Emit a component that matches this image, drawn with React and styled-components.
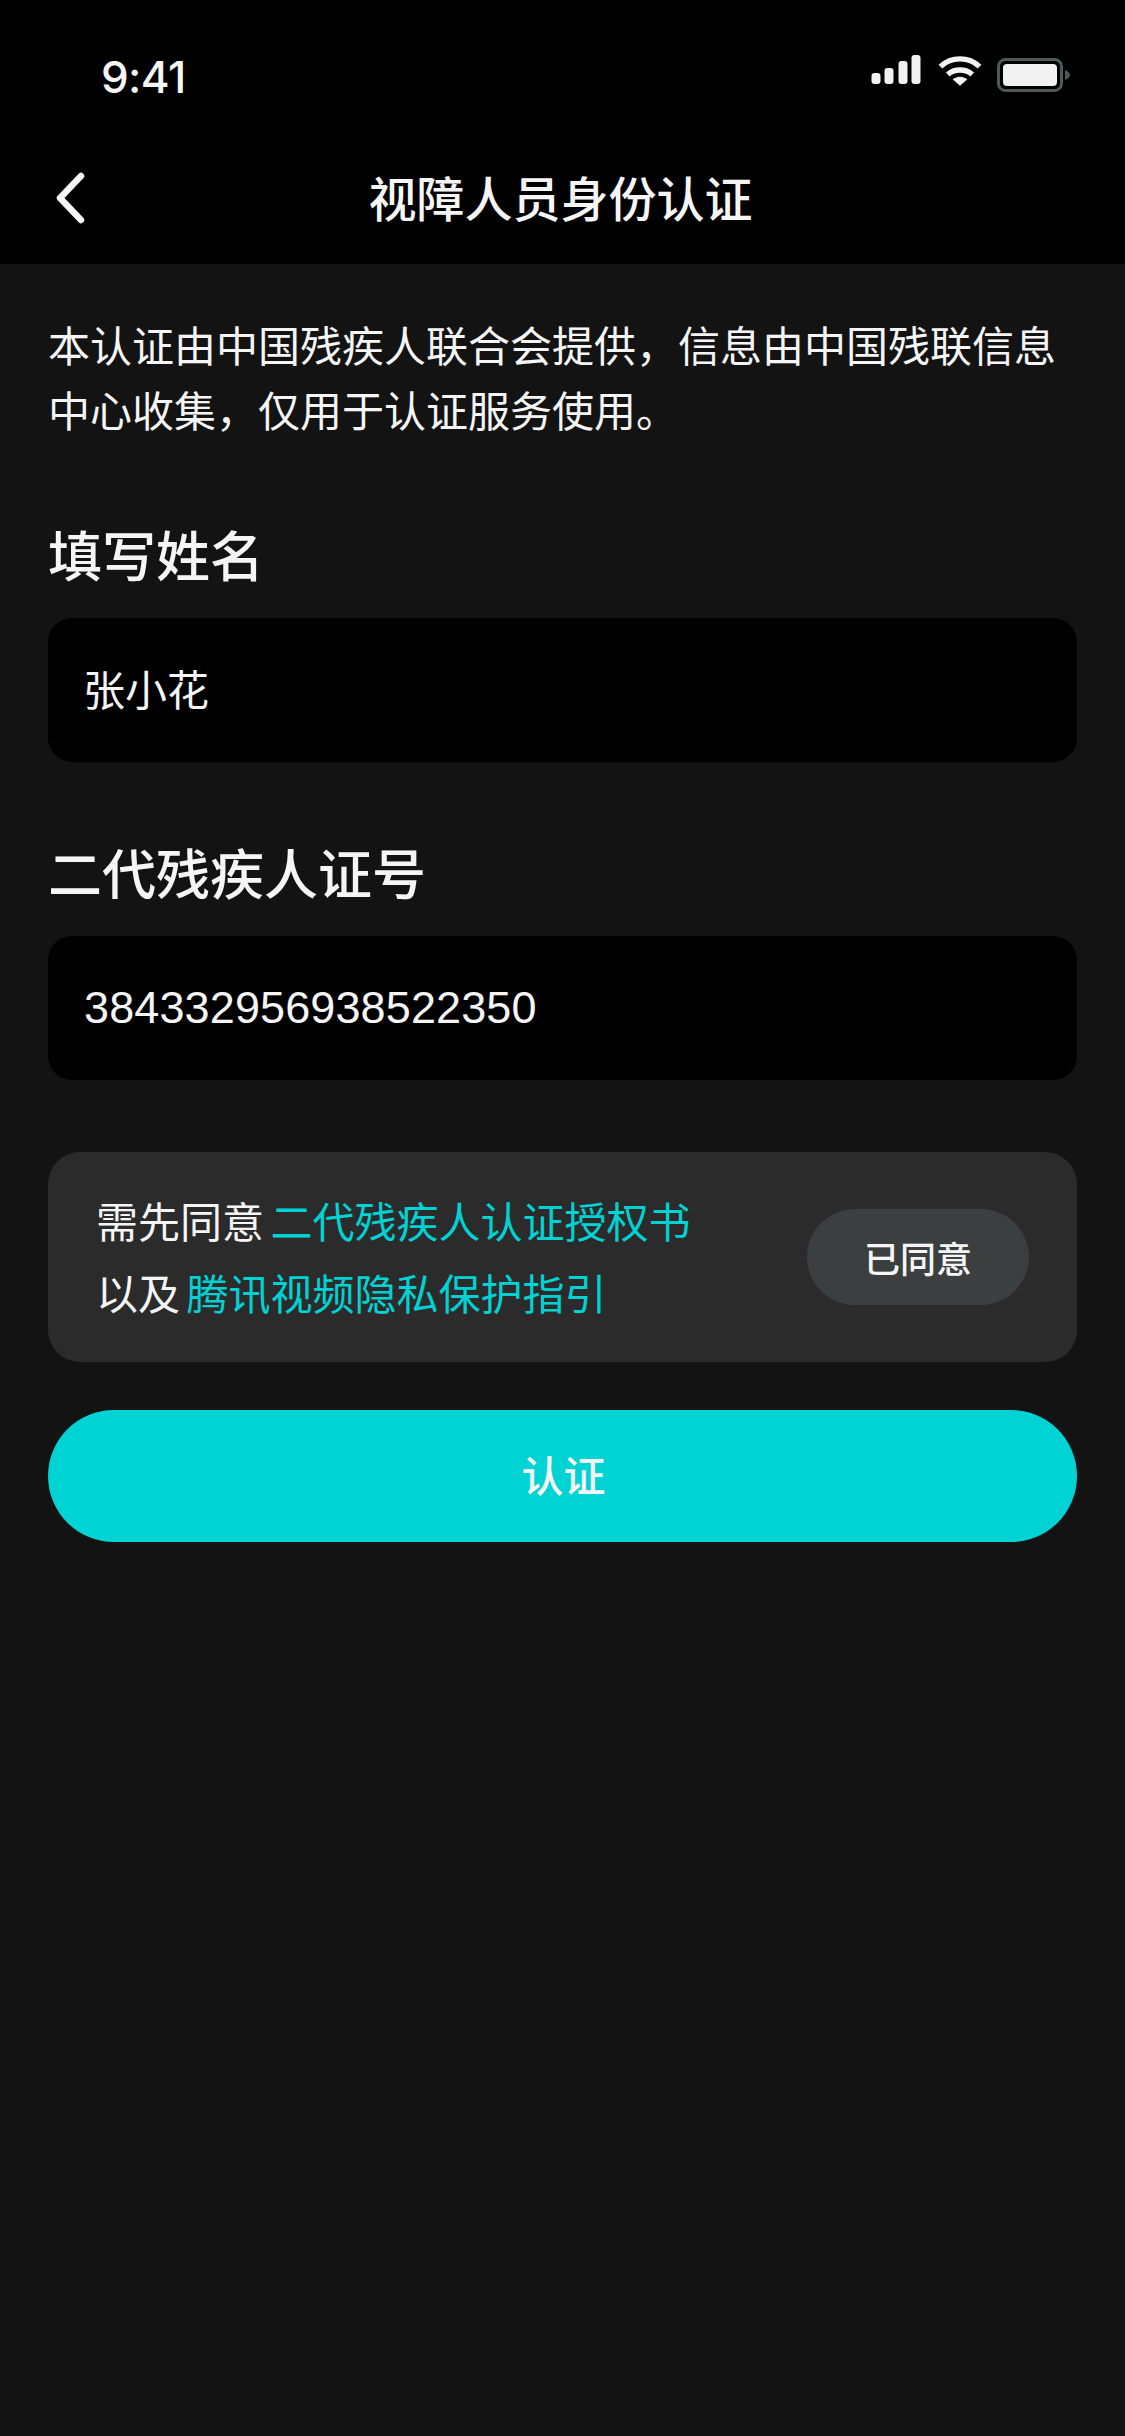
import React from 'react';
import styled, {createGlobalStyle} from 'styled-components';

const cjk = '"Noto Sans CJK SC", "Liberation Sans", sans-serif';

const GlobalStyle = createGlobalStyle`
  html, body {
    margin: 0;
    padding: 0;
    background: #131313;
  }
  * {
    box-sizing: border-box;
  }
`

function App() {
    return (
        <Page>
            <GlobalStyle/>
            <Header>
                <StatusBar>
                    <Time>9:41</Time>
                    <StatusIcons>
                        <svg width="50" height="30" viewBox="0 0 49 30">
                            <g fill="#f2f2f2">
                                <rect x="0" y="18" width="9" height="11" rx="3"/>
                                <rect x="13" y="13" width="9" height="16" rx="3"/>
                                <rect x="27" y="6" width="9" height="23" rx="3"/>
                                <rect x="40" y="0" width="9" height="29" rx="3"/>
                            </g>
                        </svg>
                        <svg width="44" height="31" viewBox="0 0 45 31">
                            <g fill="none" stroke="#f2f2f2" strokeWidth="5.5">
                                <path d="M2.5 11.5C13.5 1 31.500 1 42.500 11.500"/>
                                <path d="M10 19.500C16.500 13.500 28.500 13.500 35 19.500"/>
                            </g>
                            <path d="M22.500 31L15 24.500C19.500 21 25.500 21 30 24.500Z" fill="#f2f2f2"/>
                        </svg>
                        <BatteryIcon width="73" height="34" viewBox="0 0 73 34">
                            <rect x="1.500" y="1.500" width="63" height="31" rx="7" fill="none" stroke="#4c5a5a" strokeWidth="3"/>
                            <rect x="6" y="6" width="54" height="22" rx="4" fill="#f2f2f2"/>
                            <path d="M68 12C71 13 73 15 73 17C73 19 71 21 68 22Z" fill="#4c5a5a"/>
                        </BatteryIcon>
                    </StatusIcons>
                </StatusBar>
                <NavBar>
                    <BackButton>
                        <svg width="32" height="52" viewBox="0 0 32 52">
                            <path d="M27 4L6 26L27 48" fill="none" stroke="#f5f5f5" strokeWidth="6.500" strokeLinecap="round" strokeLinejoin="round"/>
                        </svg>
                    </BackButton>
                    <Title>视障人员身份认证</Title>
                </NavBar>
            </Header>
            <Content>
                <Intro>本认证由中国残疾人联合会提供，信息由中国残联信息中心收集，仅用于认证服务使用。</Intro>
                <FieldLabel>填写姓名</FieldLabel>
                <Field>张小花</Field>
                <FieldLabel $second>二代残疾人证号</FieldLabel>
                <Field $number>384332956938522350</Field>
                <AgreeCard>
                    <AgreeText>
                        <div>需先同意 <Link>二代残疾人认证授权书</Link></div>
                        <div>以及 <Link>腾讯视频隐私保护指引</Link></div>
                    </AgreeText>
                    <AgreedPill>已同意</AgreedPill>
                </AgreeCard>
                <SubmitButton>认证</SubmitButton>
            </Content>
        </Page>
    );
}

const Page = styled.div`
  width: 1125px;
  height: 2436px;
  overflow: hidden;
  background: #131313;
  font-family: ${cjk};
  color: #f5f5f5;
`
const Header = styled.header`
  height: 264px;
  background: #000;
`
const StatusBar = styled.div`
  height: 136px;
  padding: 50px 55px 0 101px;
  display: flex;
  justify-content: space-between;
  align-items: flex-start;
`
const Time = styled.div`
  font-family: Inter, "Liberation Sans", sans-serif;
  font-size: 44px;
  line-height: 54px;
  font-weight: 500;
  letter-spacing: -0.6px;
`
const StatusIcons = styled.div`
  display: flex;
  align-items: flex-start;
  gap: 17px;
  padding-top: 5px;
`
const BatteryIcon = styled.svg`
  margin: 3px 0 0 -2px;
`
const NavBar = styled.nav`
  position: relative;
  height: 128px;
  padding-bottom: 60px;
  display: flex;
  justify-content: center;
  align-items: center;
`
const BackButton = styled.div`
  position: absolute;
  left: 54px;
  top: 36px;
  line-height: 0;
`
const Title = styled.h1`
  margin: 0;
  font-size: 48px;
  line-height: 64px;
  font-weight: 500;
  transform: translate(-2px, 26px);
`
const Content = styled.main`
  padding: 47px 48px 0;
`
const Intro = styled.p`
  margin: 0;
  font-size: 42px;
  line-height: 65px;
  width: 1020px;
`
const FieldLabel = styled.h2`
  margin: ${props => props.$second ? '75px' : '78px'} 0 29px;
  font-size: 54px;
  line-height: 70px;
  font-weight: 500;
`
const Field = styled.div`
  height: 144px;
  padding: ${props => props.$number ? '0 36px' : '0 35px 5px'};
  display: flex;
  align-items: center;
  background: #000;
  border-radius: 24px;
  font-size: ${props => props.$number ? '45px' : '42px'};
  letter-spacing: ${props => props.$number ? '0.12px' : '0'};
  font-family: ${props => props.$number ? '"Liberation Sans", sans-serif' : cjk};
`
const AgreeCard = styled.section`
  height: 210px;
  margin-top: 72px;
  padding: 0 48px;
  display: flex;
  justify-content: space-between;
  align-items: center;
  background: #2b2b2b;
  border-radius: 32px;
`
const AgreeText = styled.div`
  font-size: 42px;
  line-height: 72px;
  word-spacing: -3px;
  padding-bottom: 3px;
`
const Link = styled.span`
  color: #00d2d3;
`
const AgreedPill = styled.div`
  width: 222px;
  height: 96px;
  display: flex;
  justify-content: center;
  align-items: center;
  background: #3c3f40;
  border-radius: 48px;
  font-size: 36px;
  font-weight: 500;
`
const SubmitButton = styled.button`
  display: block;
  width: 100%;
  height: 132px;
  margin-top: 48px;
  padding: 0 0 5px 2px;
  border: none;
  border-radius: 66px;
  background: #00d3d4;
  color: #f5f5f5;
  font-family: ${cjk};
  font-size: 42px;
  font-weight: 500;
`
export default App;
